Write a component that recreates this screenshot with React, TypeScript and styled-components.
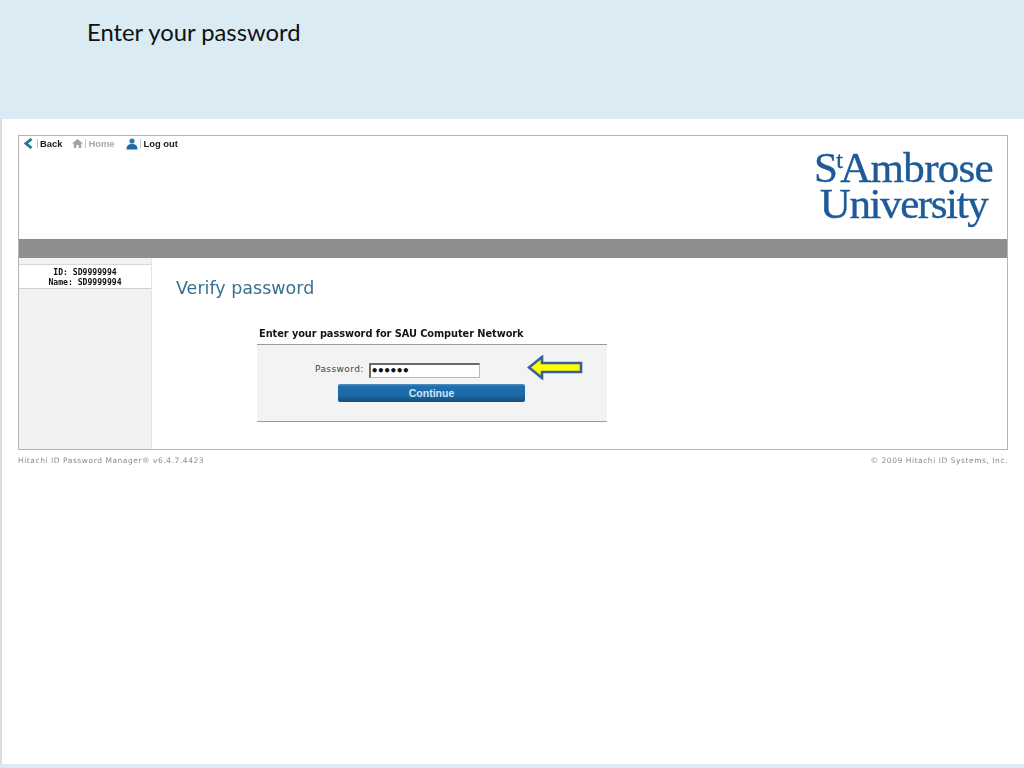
import React from "react";
import styled, { createGlobalStyle } from "styled-components";

const Global = createGlobalStyle`
  html, body { margin: 0; padding: 0; background: #fff; }
  body { font-family: "DejaVu Sans", sans-serif; }
`;

const Slide = styled.div`
  width: 1024px;
  height: 768px;
  display: flex;
  flex-direction: column;
  overflow: hidden;
  background: #fff;
`;

const Banner = styled.header`
  height: 119px;
  flex: none;
  box-sizing: border-box;
  background: #daebf4;
  padding: 16px 0 0 87px;
`;

const SlideTitle = styled.h1`
  margin: 0;
  font: 400 23.8px/33px "Lato", sans-serif;
  color: #111;
`;

const Stage = styled.main`
  flex: 1;
  box-sizing: border-box;
  border-left: 2px solid #deded4;
  padding: 16px 15px 0 16px;
  filter: blur(0.3px);
`;

const Frame = styled.section`
  width: 990px;
  height: 315px;
  box-sizing: border-box;
  border: 1px solid #b4b4b4;
  display: flex;
  flex-direction: column;
`;

const Top = styled.div`
  height: 103px;
  flex: none;
  display: flex;
  justify-content: space-between;
  padding: 0 14px 0 5px;
`;

const Nav = styled.nav`
  display: flex;
  gap: 10px;
  height: 15px;
  align-items: center;
`;

const NavItem = styled.span<{ $muted?: boolean; $push?: boolean }>`
  display: flex;
  align-items: center;
  gap: 2px;
  margin-left: ${(p) => (p.$push ? "2px" : "0")};
  font: 700 9.4px/14px "Liberation Sans", sans-serif;
  color: ${(p) => (p.$muted ? "#a8a8a8" : "#1c1c1c")};
`;

const Sep = styled.i`
  width: 1px;
  height: 9px;
  background: #c8c8c8;
`;

const Logo = styled.div`
  font-family: "Liberation Serif", serif;
  color: #1d5a97;
  text-align: center;
  padding-top: 14px;
  -webkit-text-stroke: 0.4px #1d5a97;
`;

const LogoLine = styled.div`
  font-size: 43px;
  line-height: 36px;
  letter-spacing: -0.7px;
  white-space: nowrap;
`;

const LogoName = styled(LogoLine)`
  letter-spacing: -1.4px;
`;

const LogoSup = styled.sup`
  font-size: 24px;
  line-height: 0;
  vertical-align: 14px;
  margin: 0 -2px 0 -1px;
`;

const Bar = styled.div`
  height: 19px;
  flex: none;
  background: #8e8e8e;
`;

const Body = styled.div`
  flex: 1;
  display: flex;
  min-height: 0;
`;

const Side = styled.aside`
  width: 132px;
  flex: none;
  background: #f2f2f2;
  border-right: 1px solid #e4e4e4;
  padding-top: 6px;
`;

const Identity = styled.div`
  height: 25px;
  box-sizing: border-box;
  background: #fff;
  border-top: 1px solid #d8d8d8;
  border-bottom: 1px solid #d0d0d0;
  padding-top: 2px;
  text-align: center;
  font: 700 8.1px/10px "DejaVu Sans Mono", monospace;
  color: #111;
`;

const Content = styled.div`
  flex: 1;
  padding: 18px 0 0 24px;
`;

const PageTitle = styled.h2`
  margin: 0;
  font: 400 17.5px/24px "DejaVu Sans", sans-serif;
  color: #38708f;
`;

const FormBlock = styled.form`
  width: 350px;
  margin: 27px 0 0 81px;
`;

const FormTitle = styled.h3`
  margin: 0;
  padding: 0 0 3px 2px;
  font: 700 9.8px/14px "DejaVu Sans", sans-serif;
  color: #141414;
  letter-spacing: -0.06px;
`;

const Panel = styled.div`
  position: relative;
  height: 78px;
  box-sizing: border-box;
  background: #f3f3f3;
  border-top: 1px solid #9a9a9a;
  border-bottom: 1px solid #9a9a9a;
  padding-top: 18px;
`;

const Row = styled.div`
  display: flex;
  align-items: flex-start;
  padding-left: 58px;
  gap: 5px;
  font: 400 9px/12px "DejaVu Sans", sans-serif;
  letter-spacing: 0.4px;
  color: #444;
`;

const Field = styled.div`
  width: 111px;
  height: 15px;
  box-sizing: border-box;
  background: #fff;
  border: 1px solid #b8b8b8;
  border-top: 2px solid #6a6a6a;
  border-left: 2px solid #6a6a6a;
  font: 700 12px/13px "DejaVu Sans", sans-serif;
  letter-spacing: -1.4px;
  color: #111;
  overflow: hidden;
`;

const Continue = styled.button`
  display: block;
  width: 187px;
  height: 18px;
  margin: 6px 0 0 81px;
  padding: 0;
  border: 0;
  border-radius: 2px;
  background: linear-gradient(#5a93c0 0, #1f6fae 12%, #1c6aa8 60%, #134f80 100%);
  color: #cfe6f5;
  font: 700 10.5px/16px "Liberation Sans", sans-serif;
`;

const Pointer = styled.svg`
  position: absolute;
  left: 270px;
  top: 10px;
`;

const Foot = styled.footer`
  width: 990px;
  display: flex;
  justify-content: space-between;
  margin-top: 5px;
  font: 400 7.5px/11px "DejaVu Sans", sans-serif;
  letter-spacing: 0.55px;
  color: #8a8a8a;
`;

const Strip = styled.div`
  height: 4px;
  flex: none;
  background: #daebf4;
`;

export default function App() {
  return (
    <Slide>
      <Global />
      <Banner>
        <SlideTitle>Enter your password</SlideTitle>
      </Banner>
      <Stage>
        <Frame>
          <Top>
            <Nav>
              <NavItem>
                <svg width="11" height="11" viewBox="0 0 11 11">
                  <path d="M7.5 1 L2 5.5 L7.5 10" fill="none" stroke="#2a6f9e" strokeWidth="2.8" />
                </svg>
                <Sep />
                Back
              </NavItem>
              <NavItem $muted>
                <svg width="11" height="11" viewBox="0 0 12 11">
                  <path d="M6 0.5 L12 5.5 H10 V10.5 H7.3 V7 H4.7 V10.5 H2 V5.5 H0 Z" fill="#a2a2a2" />
                </svg>
                <Sep />
                Home
              </NavItem>
              <NavItem $push>
                <svg width="12" height="12" viewBox="0 0 12 12">
                  <circle cx="6" cy="3" r="2.6" fill="#2a77ad" />
                  <path d="M0.5 11.5 C0.5 7.5 2.5 6 6 6 C9.5 6 11.5 7.5 11.5 11.5 Z" fill="#1f6aa0" />
                </svg>
                <Sep />
                Log out
              </NavItem>
            </Nav>
            <Logo>
              <LogoLine>
                S<LogoSup>t</LogoSup>Ambrose
              </LogoLine>
              <LogoName>University</LogoName>
            </Logo>
          </Top>
          <Bar />
          <Body>
            <Side>
              <Identity>
                ID: SD9999994
                <br />
                Name: SD9999994
              </Identity>
            </Side>
            <Content>
              <PageTitle>Verify password</PageTitle>
              <FormBlock>
                <FormTitle>Enter your password for SAU Computer Network</FormTitle>
                <Panel>
                  <Row>
                    Password:
                    <Field>••••••</Field>
                  </Row>
                  <Continue type="button">Continue</Continue>
                  <Pointer width="56" height="25" viewBox="0 0 56 25">
                    <path
                      d="M2 12.5 L15 2 V8 H54 V17 H15 V23 Z"
                      fill="#ffff00"
                      stroke="#3a5f9a"
                      strokeWidth="2.6"
                    />
                  </Pointer>
                </Panel>
              </FormBlock>
            </Content>
          </Body>
        </Frame>
        <Foot>
          <span>Hitachi ID Password Manager® v6.4.7.4423</span>
          <span>© 2009 Hitachi ID Systems, Inc.</span>
        </Foot>
      </Stage>
      <Strip />
    </Slide>
  );
}
